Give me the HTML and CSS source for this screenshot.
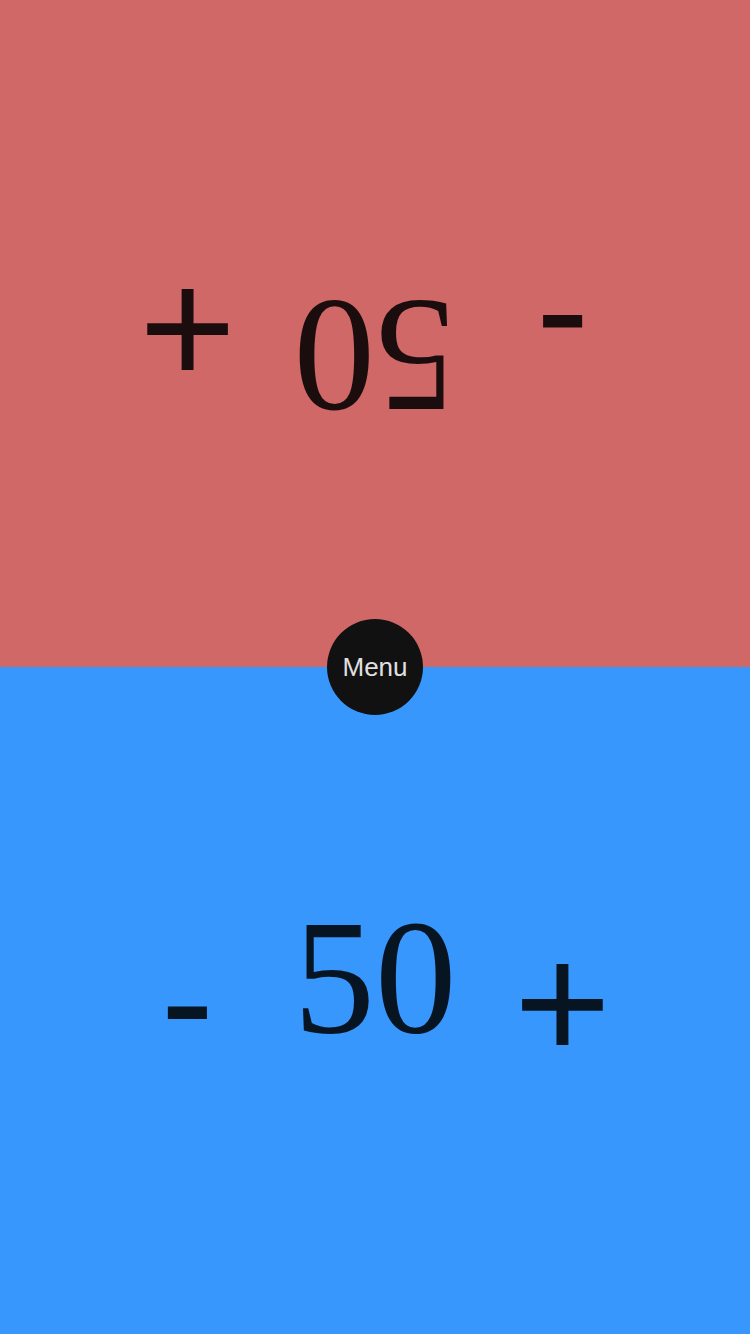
FILE: index.html
```html
<!DOCTYPE html>
<html>
<head>
<meta charset="utf-8">
<link rel="stylesheet" href="styles.css">
</head>
<body>
<main class="board">
  <section class="player player-top">
    <div class="counter">
      <span class="btn minus">-</span>
      <span class="score">50</span>
      <span class="btn plus">+</span>
    </div>
  </section>
  <section class="player player-bottom">
    <div class="counter">
      <span class="btn minus">-</span>
      <span class="score">50</span>
      <span class="btn plus">+</span>
    </div>
  </section>
  <button class="menu">Menu</button>
</main>
</body>
</html>
```
FILE: styles.css
```css
html, body {
  margin: 0;
  padding: 0;
  height: 100%;
}
body {
  font-family: "Liberation Sans", Arial, sans-serif;
}
.board {
  position: relative;
  display: flex;
  flex-direction: column;
  width: 750px;
  height: 1334px;
}
.player {
  flex: 1;
  display: flex;
  align-items: center;
  justify-content: center;
}
.player-top {
  background: #cf6866;
  transform: rotate(180deg);
}
.player-bottom {
  background: #3897fc;
}
.counter {
  display: flex;
  align-items: center;
  justify-content: center;
  color: rgba(0, 0, 0, 0.87);
  margin-top: -47px;
}
.btn {
  width: 187.5px;
  text-align: center;
  font-family: "Liberation Sans", Arial, sans-serif;
  font-size: 160px;
  line-height: 1;
}
.minus {
  padding-top: 46px;
}
.plus {
  padding-top: 52px;
  font-size: 166px;
}
.score {
  width: 187.5px;
  text-align: center;
  font-family: "Liberation Serif", "Times New Roman", serif;
  font-size: 163px;
  line-height: 1;
}
.menu {
  position: absolute;
  left: 327px;
  top: 619px;
  width: 96px;
  height: 96px;
  border-radius: 50%;
  border: none;
  padding: 0;
  background: #111111;
  color: #e0e0e0;
  font-family: "Liberation Sans", Arial, sans-serif;
  font-size: 26px;
}
```
